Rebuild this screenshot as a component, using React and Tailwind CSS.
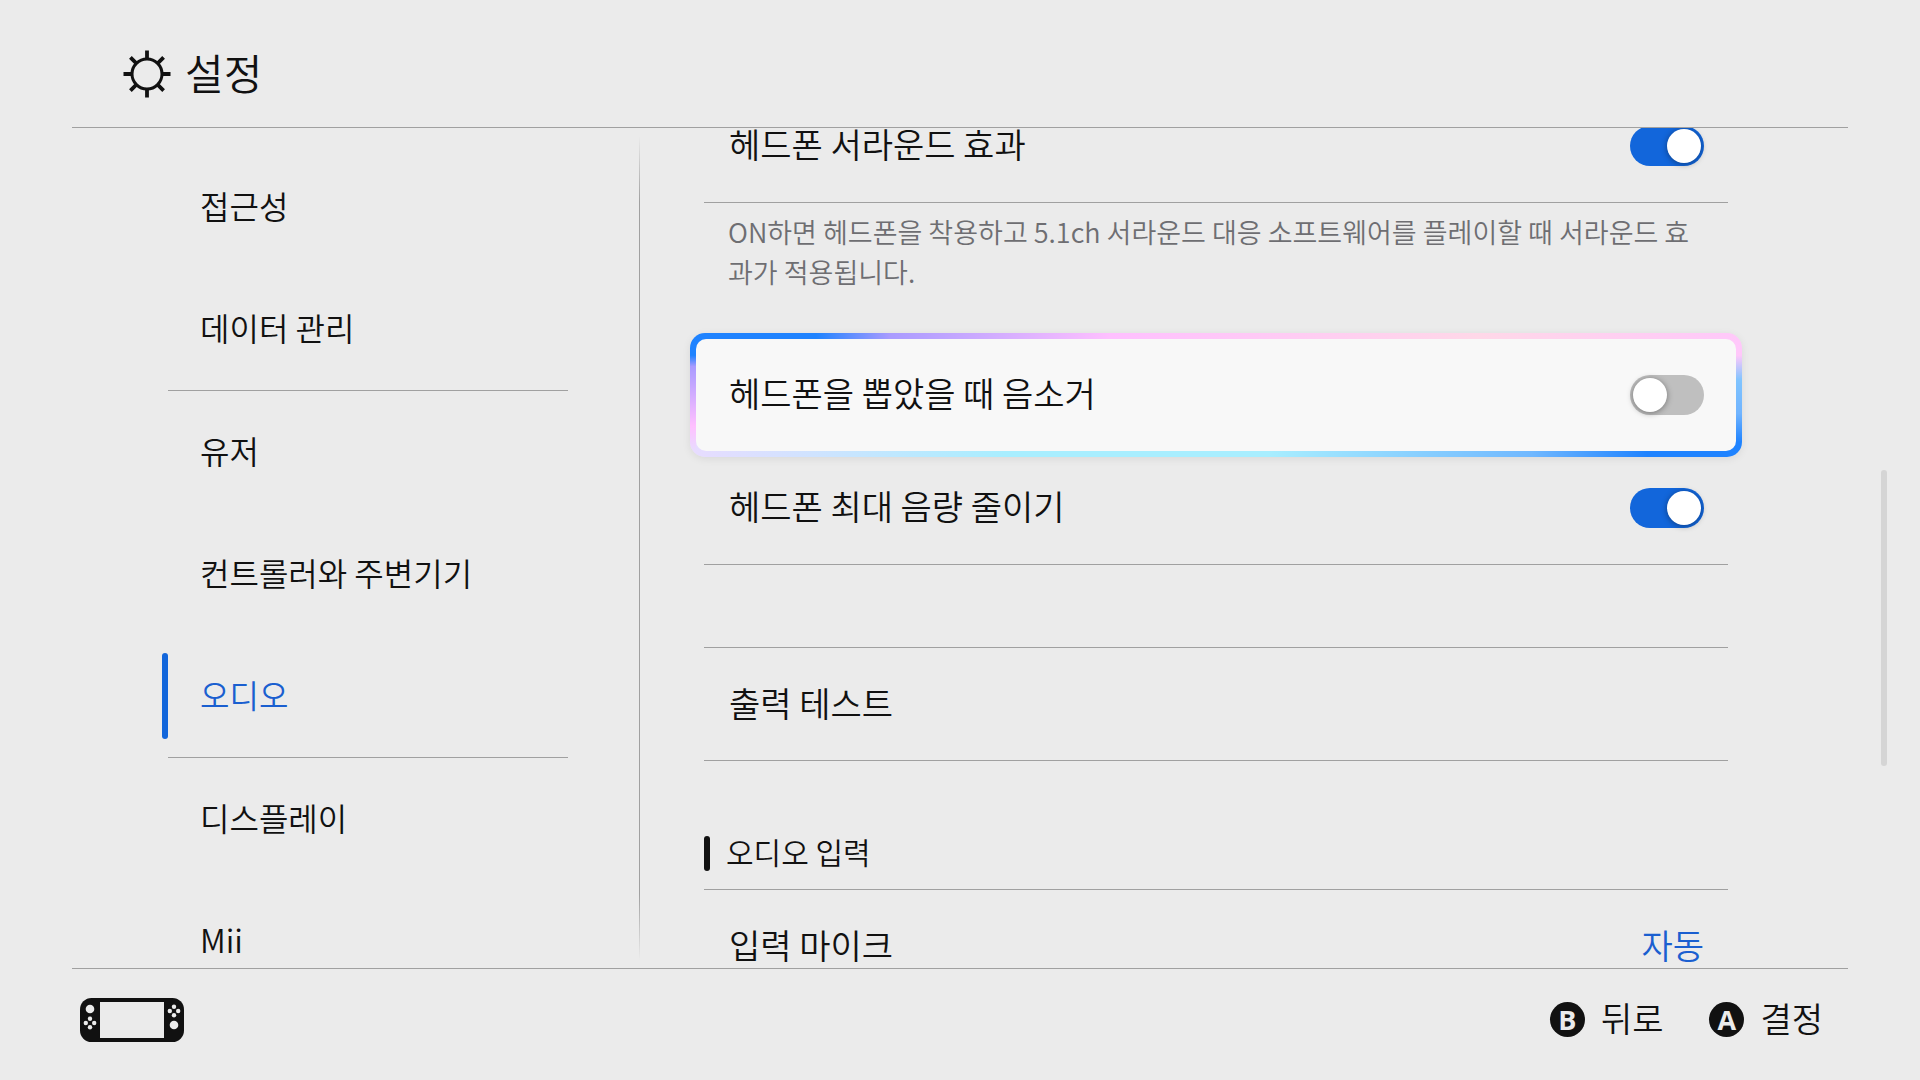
const nav = [
  { label: "접근성" },
  { label: "데이터 관리", line: true },
  { label: "유저" },
  { label: "컨트롤러와 주변기기" },
  { label: "오디오", active: true, line: true },
  { label: "디스플레이" },
  { label: "Mii" },
];

function GearIcon() {
  return (
    <svg viewBox="0 0 48 48" className="size-12 shrink-0" fill="none" stroke="currentColor" strokeWidth="3.8" aria-hidden="true">
      <circle cx="24" cy="24" r="15" strokeWidth="3" />
      <path d="M24 0.500V9M24 39v8.500M0.500 24H9M39 24h8.500M7.400 7.400l6 6M34.600 34.600l6 6M40.600 7.400l-6 6M13.400 34.600l-6 6" />
    </svg>
  );
}

function ConsoleIcon() {
  return (
    <svg viewBox="0 0 104 44" className="h-11 w-[104px]" aria-hidden="true">
      <rect width="104" height="44" rx="11.500" fill="#111" />
      <rect x="20" y="4" width="64" height="36" fill="#ebebeb" />
      <g fill="#ebebeb">
        <circle cx="10" cy="11" r="4.300" />
        <circle cx="10" cy="20.800" r="2.200" />
        <circle cx="10" cy="29.200" r="2.200" />
        <circle cx="5.800" cy="25" r="2.200" />
        <circle cx="14.200" cy="25" r="2.200" />
        <circle cx="94" cy="27" r="4.300" />
        <circle cx="94" cy="8.800" r="2.200" />
        <circle cx="94" cy="17.200" r="2.200" />
        <circle cx="89.800" cy="13" r="2.200" />
        <circle cx="98.200" cy="13" r="2.200" />
      </g>
    </svg>
  );
}

function Toggle({ id, on }) {
  return (
    <span className="relative block h-10 w-[74px] shrink-0">
      <input
        id={id}
        type="checkbox"
        role="switch"
        defaultChecked={on}
        className="peer block h-10 w-[74px] cursor-pointer appearance-none rounded-full bg-[#bfbfbf] checked:bg-[#1266db]"
      />
      <span className="pointer-events-none absolute top-[3px] left-[3px] size-[34px] rounded-full bg-white shadow-[0_1px_6px_rgba(0,0,0,0.4)] peer-checked:left-[37px]" />
    </span>
  );
}

function ToggleRow({ id, label, on }) {
  return (
    <div className="flex h-[113px] items-center justify-between border-b border-[#a0a0a0] pr-6 pl-[25px]">
      <label htmlFor={id} className="pb-1 leading-10">{label}</label>
      <Toggle id={id} on={on} />
    </div>
  );
}

function Hint({ letter, children }) {
  return (
    <button type="button" className="flex items-center gap-4 text-[34px] leading-10">
      <span className="flex size-[35px] items-center justify-center rounded-full bg-[#111] font-['Open_Sans',sans-serif] text-[27px] leading-none font-bold text-[#ebebeb]">
        {letter}
      </span>
      <span className="pb-0.5">{children}</span>
    </button>
  );
}

export default function App() {
  return (
    <div className="flex h-screen flex-col overflow-hidden bg-[#ebebeb] font-['Noto_Sans_CJK_KR',sans-serif] font-[350] text-[#111]">
      <header className="mx-[72px] flex h-32 shrink-0 items-center gap-[14px] border-b border-[#a0a0a0] pt-5 pl-[51px]">
        <GearIcon />
        <h1 className="pb-1 text-[42px] leading-none">설정</h1>
      </header>

      <div className="flex min-h-0 flex-1 pr-[33px] pl-[168px]">
        <nav className="w-[400px] shrink-0 pt-[18px] text-[32px]">
          <ul>
            {nav.map((item) => (
              <li key={item.label} className={item.line ? "border-b border-[#a0a0a0]" : ""}>
                <a
                  href="#"
                  aria-current={item.active ? "page" : undefined}
                  className={
                    item.active
                      ? "relative flex h-[122px] items-center pb-1 pl-8 text-[#1a5fd0] before:absolute before:top-[18px] before:-left-1.5 before:h-[86px] before:w-1.5 before:rounded-sm before:bg-[#1266db]"
                      : "flex h-[122px] items-center pb-1 pl-8"
                  }
                >
                  {item.label}
                </a>
              </li>
            ))}
          </ul>
        </nav>

        <div className="my-2 ml-[71px] w-px shrink-0 [background-image:linear-gradient(transparent,#a0a0a0_8%,#a0a0a0_92%,transparent)]" />

        <main className="min-w-0 flex-1 overflow-hidden px-16 text-[34px]">
          <div className="-mt-[38px]">
            <ToggleRow id="surround" label="헤드폰 서라운드 효과" on />
            <p className="px-6 pt-[9px] pb-[41px] text-[27px] leading-10 text-[#6e6e72]">
              ON하면 헤드폰을 착용하고 5.1ch 서라운드 대응 소프트웨어를 플레이할 때 서라운드 효과가 적용됩니다.
            </p>
            <div className="-mx-[14px] -mb-[5px] rounded-[15px] p-1.5 shadow-[0_2px_8px_rgba(0,0,0,0.08)] [background:linear-gradient(#1f83ff_18%,#a99bff_27%,#ffc0ff_75%,#e8dcff_95%)_left/6px_100%_no-repeat,linear-gradient(#ffc8fa_18%,#80c4ff_38%,#70b4ff_65%,#1f83ff_88%)_right/6px_100%_no-repeat,linear-gradient(90deg,#1f83ff_12%,#a99bff_19%,#ffc0ff_40%,#ffd8e8_75%,#ffc8fa)_top/100%_50%_no-repeat,linear-gradient(90deg,#e8dcff,#a8eeff_30%,#a8eeff_55%,#70b8ff_80%,#1f83ff_91%)_bottom/100%_50%_no-repeat]">
              <div className="flex h-28 items-center justify-between rounded-[10px] bg-[#f8f8f8] pr-8 pl-[33px]">
                <label htmlFor="mute" className="pb-1 leading-10">헤드폰을 뽑았을 때 음소거</label>
                <Toggle id="mute" />
              </div>
            </div>
            <ToggleRow id="limit" label="헤드폰 최대 음량 줄이기" on />
            <button type="button" className="mt-[82px] flex h-[114px] w-full items-center border-y border-[#a0a0a0] pr-6 pb-1 pl-[25px]">
              출력 테스트
            </button>
            <h2 className="mt-[57px] flex h-[72px] items-center gap-4 border-b border-[#a0a0a0] text-[30px]">
              <span className="h-[35px] w-1.5 rounded-sm bg-[#111]" />
              <span className="pb-1">오디오 입력</span>
            </h2>
            <button type="button" className="flex h-28 w-full items-center justify-between pr-6 pb-1 pl-[25px]">
              입력 마이크
              <span className="text-[#1a5fd0]">자동</span>
            </button>
          </div>
        </main>

        <div className="mt-[342px] ml-[89px] h-[296px] w-1.5 shrink-0 rounded-full bg-[#d5d5d5]" />
      </div>

      <footer className="mx-[72px] flex h-28 shrink-0 items-center justify-between border-t border-[#a0a0a0] pr-[25px] pb-[9px] pl-2">
        <ConsoleIcon />
        <div className="flex gap-[46px] pb-0.5">
          <Hint letter="B">뒤로</Hint>
          <Hint letter="A">결정</Hint>
        </div>
      </footer>
    </div>
  );
}
